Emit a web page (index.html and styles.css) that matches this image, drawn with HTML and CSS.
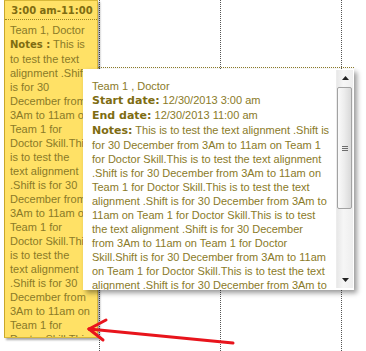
FILE: index.html
```html
<!DOCTYPE html>
<html>
<head>
<meta charset="utf-8">
<link rel="stylesheet" href="styles.css">
</head>
<body>
<div class="calendar">
  <div class="col col-1">
    <div class="event">
      <div class="event-head">3:00 am-11:00</div>
      <div class="event-body">
        <div>Team 1, Doctor</div>
        <div><b>Notes :</b> This is</div>
        <div>to test the text</div>
        <div>alignment .Shift</div>
        <div>is for 30</div>
        <div>December from</div>
        <div>3Am to 11am on</div>
        <div>Team 1 for</div>
        <div>Doctor Skill.This</div>
        <div>is to test the</div>
        <div>text alignment</div>
        <div>.Shift is for 30</div>
        <div>December from</div>
        <div>3Am to 11am on</div>
        <div>Team 1 for</div>
        <div>Doctor Skill.This</div>
        <div>is to test the</div>
        <div>text alignment</div>
        <div>.Shift is for 30</div>
        <div>December from</div>
        <div>3Am to 11am on</div>
        <div>Team 1 for</div>
        <div>Doctor Skill.This</div>
      </div>
    </div>
  </div>
  <div class="col col-2"></div>
  <div class="col col-3"></div>
  <div class="col col-4"></div>
</div>

<div class="tooltip">
  <div class="tip-content">
    <div>Team 1 , Doctor</div>
    <div><b>Start date:</b> 12/30/2013 3:00 am</div>
    <div><b>End date:</b> 12/30/2013 11:00 am</div>
    <div><b>Notes:</b> This is to test the text alignment .Shift is</div>
    <div>for 30 December from 3Am to 11am on Team 1</div>
    <div>for Doctor Skill.This is to test the text alignment</div>
    <div>.Shift is for 30 December from 3Am to 11am on</div>
    <div>Team 1 for Doctor Skill.This is to test the text</div>
    <div>alignment .Shift is for 30 December from 3Am to</div>
    <div>11am on Team 1 for Doctor Skill.This is to test</div>
    <div>the text alignment .Shift is for 30 December</div>
    <div>from 3Am to 11am on Team 1 for Doctor</div>
    <div>Skill.Shift is for 30 December from 3Am to 11am</div>
    <div>on Team 1 for Doctor Skill.This is to test the text</div>
    <div>alignment .Shift is for 30 December from 3Am to</div>
  </div>
  <div class="scrollbar">
    <div class="sb-btn"><svg width="7" height="4" viewBox="0 0 7 4"><polygon points="3.5,0 7,4 0,4" fill="#222"/></svg></div>
    <div class="sb-track">
      <div class="sb-thumb"><span class="grip"></span></div>
    </div>
    <div class="sb-btn"><svg width="7" height="4" viewBox="0 0 7 4"><polygon points="0,0 7,0 3.5,4" fill="#222"/></svg></div>
  </div>
</div>

<svg class="arrow" width="366" height="351" viewBox="0 0 366 351">
  <g stroke="#e8141c" stroke-width="3" stroke-linecap="round" fill="none">
    <line x1="233" y1="343" x2="89" y2="329"/>
    <line x1="89" y1="329" x2="106" y2="320"/>
    <line x1="89" y1="329" x2="103" y2="340"/>
  </g>
</svg>
</body>
</html>
```

FILE: styles.css
```css
html, body {
  margin: 0;
  padding: 0;
}
body {
  width: 366px;
  height: 351px;
  overflow: hidden;
  position: relative;
  background: #ffffff;
  font-family: "Liberation Sans", Arial, sans-serif;
  font-size: 11px;
  line-height: 14px;
  color: #8a7a28;
}
b {
  font-family: "DejaVu Sans", Verdana, sans-serif;
  font-weight: bold;
  color: #7e6c12;
}

.calendar {
  display: flex;
  height: 351px;
}
.col {
  height: 100%;
  border-right: 1px dotted #555;
}
.col-1 {
  width: 99px;
  position: relative;
}
.col-2, .col-3 {
  width: 120px;
}
.col-4 {
  flex: 1;
  border-right: none;
}

.event {
  position: absolute;
  left: 4px;
  top: 0;
  width: 94px;
  height: 338px;
  box-sizing: border-box;
  background: #ffe166;
  border: 1px solid #d8b838;
  border-left-color: #c9a72a;
  box-shadow: 2px 2px 2px rgba(0, 0, 0, 0.35);
  overflow: hidden;
}
.event-head {
  padding-top: 2px;
  height: 16px;
  line-height: 16px;
  text-align: center;
  font-family: "DejaVu Sans", Verdana, sans-serif;
  font-weight: bold;
  font-size: 10px;
  color: #7e6c12;
  border-bottom: 1px dotted #9a8420;
  padding-left: 2px;
}
.event-body {
  padding: 3px 0 0 5px;
  white-space: nowrap;
}
.event-body b {
  font-size: 10px;
}

.tooltip {
  position: absolute;
  left: 83px;
  top: 69px;
  width: 271px;
  height: 221px;
  background: #ffffff;
  box-shadow: 3px 3px 5px rgba(0, 0, 0, 0.4);
  display: flex;
}
.tooltip::before {
  content: "";
  position: absolute;
  left: 15px;
  right: 0;
  top: -2px;
  border-top: 1px dotted #8a7a28;
}
.tip-content {
  flex: 1;
  padding: 10px 0 0 9px;
  white-space: nowrap;
  overflow: hidden;
}

.scrollbar {
  width: 16px;
  margin: 1px 1px 2px 0;
  display: flex;
  flex-direction: column;
  background: linear-gradient(to right, #e8e8e8, #f6f6f6 40%, #eeeeee);
  border-left: 1px solid #ececec;
}
.sb-btn {
  height: 16px;
  display: flex;
  align-items: center;
  justify-content: center;
}
.sb-btn svg {
  display: block;
}
.sb-track {
  flex: 1;
  display: flex;
  flex-direction: column;
}
.sb-thumb {
  height: 122px;
  margin: 1px 1px 0 0;
  box-sizing: border-box;
  border: 1px solid #a2a2a2;
  border-radius: 2px;
  background: linear-gradient(to right, #fafafa, #ececec 50%, #d9d9d9);
  display: flex;
  align-items: center;
  justify-content: center;
}
.grip {
  width: 6px;
  height: 5px;
  background: repeating-linear-gradient(to bottom, #6d6d6d 0, #6d6d6d 1px, transparent 1px, transparent 2px);
}

.arrow {
  position: absolute;
  left: 0;
  top: 0;
}
```
